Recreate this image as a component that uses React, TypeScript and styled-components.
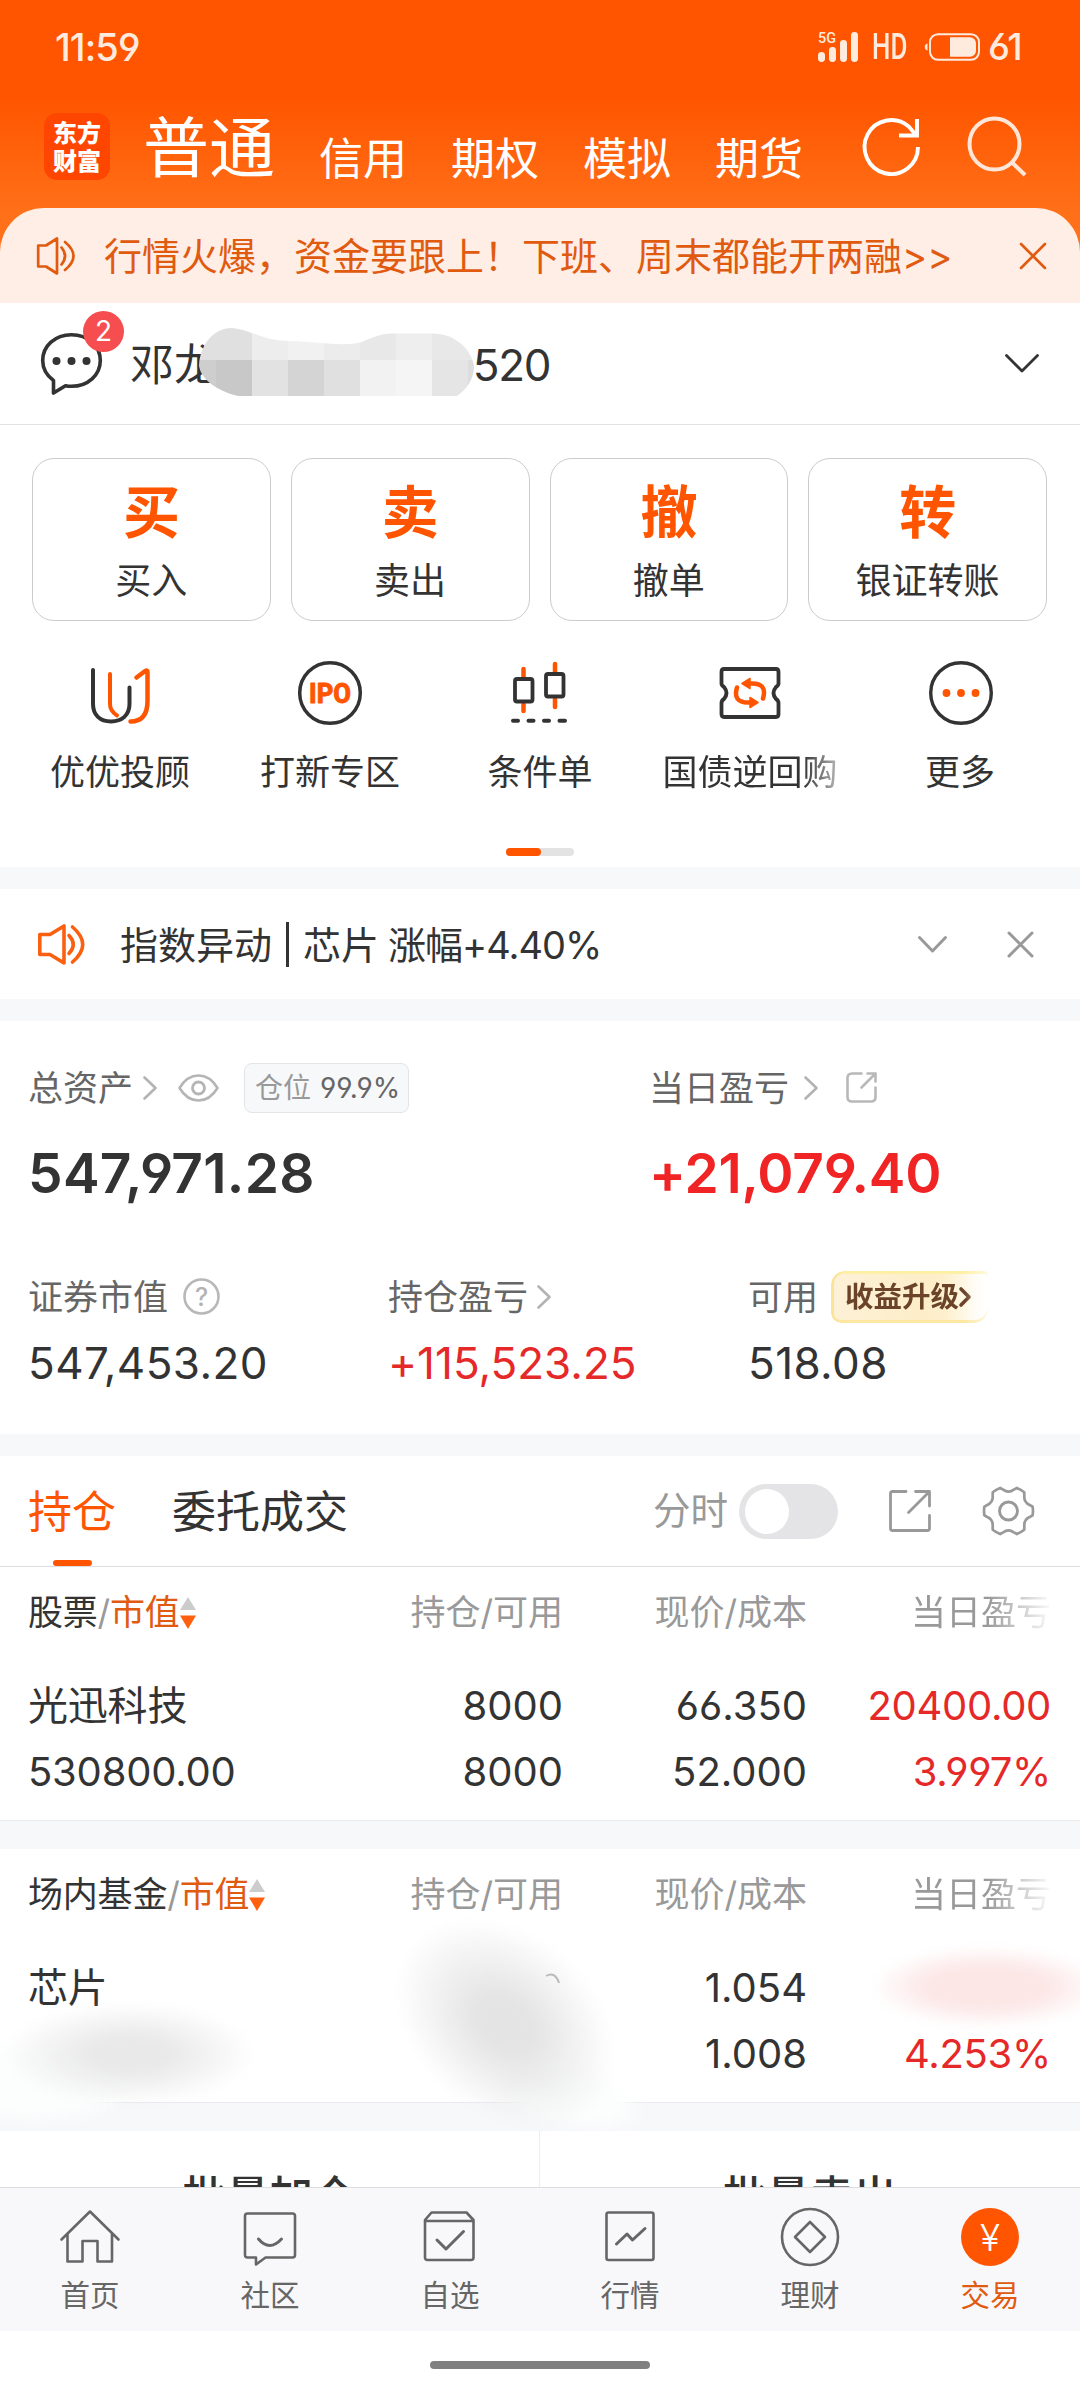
import React from 'react';
import styled, { createGlobalStyle, css } from 'styled-components';

const ORANGE = '#ff5500';
const DEEP_ORANGE = '#e05a10';
const INK = '#333333';
const RED = '#e52828';

const GlobalStyle = createGlobalStyle`
  * { box-sizing: border-box; }
  html, body { margin: 0; padding: 0; background: #ffffff; }
  body {
    width: 1080px;
    font-family: Inter, "Noto Sans CJK SC", sans-serif;
    font-feature-settings: 'cv03', 'cv04', 'calt' 0;
    color: ${INK};
    white-space: nowrap;
  }
  svg { display: block; flex: none; overflow: visible; }
`;

const Screen = styled.div`
  width: 1080px;
  height: 2400px;
  overflow: hidden;
  display: flex;
  flex-direction: column;
  background: #ffffff;
`;

/* ---------- top area ---------- */

const Top = styled.header`
  height: 303px;
  flex: none;
  background: linear-gradient(180deg, #ff5500 0, #ff5500 98px, #ff7018 212px);
`;

const StatusBar = styled.div`
  height: 94px;
  display: flex;
  align-items: center;
  padding: 0 57px 0 55px;
  color: #ffeade;
`;

const Clock = styled.span`
  font-size: 38px;
  font-weight: 500;
  line-height: 40px;
  letter-spacing: -0.9px;
  margin-right: auto;
`;

const SignalText = styled.text`
  font: 500 15.5px Roboto, sans-serif;
  fill: #ffeade;
`;

const HdLabel = styled.span`
  font: 500 37px/40px Roboto, sans-serif;
  width: 34px;
  margin: 0 19px 0 14px;
  transform: scaleX(0.7);
  transform-origin: left center;
`;

const BatteryText = styled.span`
  font-size: 37px;
  font-weight: 500;
  line-height: 40px;
  letter-spacing: -2.6px;
  width: 35px;
  margin-left: 8px;
`;

const Nav = styled.nav`
  height: 104px;
  display: flex;
  align-items: center;
  padding: 0 54px 0 44px;
  color: #ffffff;
`;

const Logo = styled.div`
  width: 66px;
  height: 67px;
  border-radius: 13px;
  background: #ff4600;
  font: 900 24px/28px "Noto Sans CJK SC", sans-serif;
  text-align: center;
  white-space: normal;
  padding: 5px 8px 0;
  margin-right: 33px;
`;

const NavTabs = styled.div`
  display: flex;
  gap: 44px;
  margin-right: auto;
`;

const NavTab = styled.span<{ $active?: boolean }>`
  font-size: ${p => (p.$active ? 66 : 44)}px;
  line-height: 80px;
  margin-top: ${p => (p.$active ? 15 : 26)}px;
`;

const NavIcons = styled.div`
  display: flex;
  gap: 48px;
`;

const Promo = styled.div`
  height: 95px;
  margin-top: 10px;
  border-radius: 44px 44px 0 0;
  background: #ffeee6;
  color: ${DEEP_ORANGE};
  display: flex;
  align-items: center;
  padding: 0 34px 0 37px;
`;

const PromoText = styled.span`
  font-size: 38px;
  line-height: 50px;
  margin: 0 auto 0 29px;
`;

/* ---------- account ---------- */

const Account = styled.div`
  height: 122px;
  flex: none;
  border-bottom: 1px solid #e2e2e2;
  display: flex;
  align-items: center;
  padding: 0 41px;
`;

const ChatButton = styled.div`
  position: relative;
  margin-right: 27px;
`;

const Badge = styled.span`
  position: absolute;
  left: 42px;
  top: -22px;
  width: 41px;
  height: 41px;
  border-radius: 50%;
  background: #f64d50;
  color: #ffffff;
  font-size: 28px;
  line-height: 41px;
  text-align: center;
`;

const AccountName = styled.div`
  position: relative;
  display: flex;
  align-items: center;
  justify-content: space-between;
  width: 420px;
  font-size: 44px;
  line-height: 60px;
  margin: 2px auto 0 1px;
`;

const Mosaic = styled.svg`
  position: absolute;
  left: 69px;
  top: -7px;
`;

const AccountTail = styled.span`
  letter-spacing: -1.4px;
`;

/* ---------- trade shortcuts ---------- */

const Cards = styled.div`
  flex: none;
  display: grid;
  grid-template-columns: repeat(4, 1fr);
  gap: 20px;
  padding: 33px 33px 0 32px;
`;

const Card = styled.div`
  height: 163px;
  border: 1px solid #cccccc;
  border-radius: 22px;
  display: flex;
  flex-direction: column;
  align-items: center;
`;

const CardGlyph = styled.span`
  font-size: 57px;
  font-weight: 700;
  line-height: 70px;
  color: ${ORANGE};
  margin-top: 19px;
`;

const CardLabel = styled.span`
  font-size: 36px;
  line-height: 50px;
  margin-top: 8px;
`;

const Shortcuts = styled.div`
  flex: none;
  display: grid;
  grid-template-columns: repeat(5, 210px);
  justify-content: center;
  padding-top: 40px;
`;

const Shortcut = styled.div`
  display: flex;
  flex-direction: column;
  align-items: center;
`;

const ShortcutLabel = styled.span<{ $fade?: boolean }>`
  font-size: 35px;
  line-height: 50px;
  margin-top: 22px;
  ${p =>
    p.$fade &&
    css`
      mask-image: linear-gradient(90deg, #000 80%, rgba(0, 0, 0, 0.35) 100%);
    `}
`;

const IpoText = styled.text`
  font: 800 28px Roboto, sans-serif;
  fill: ${ORANGE};
  stroke: ${ORANGE};
  stroke-width: 0.8px;
`;

const Pager = styled.div`
  flex: none;
  align-self: center;
  display: flex;
  width: 68px;
  height: 8px;
  margin: 51px 0 11px;
  border-radius: 4px;
  background: #e3e3e3;
`;

const PagerThumb = styled.div`
  width: 35px;
  border-radius: 4px;
  background: ${ORANGE};
`;

const Divider = styled.div<{ $h: number }>`
  flex: none;
  height: ${p => p.$h}px;
  background: #f7f8fa;
`;

/* ---------- notice ---------- */

const Notice = styled.div`
  flex: none;
  height: 110px;
  display: flex;
  align-items: center;
  padding: 0 47px 0 38px;
`;

const NoticeText = styled.span`
  display: flex;
  align-items: center;
  font-size: 38px;
  line-height: 50px;
  margin: 1px auto 0 35px;
`;

const NoticeBar = styled.i`
  width: 3px;
  height: 45px;
  background: ${INK};
  margin: 0 14px;
`;

const NoticeRate = styled.span`
  margin-left: 9px;
  letter-spacing: -1px;
`;

const NoticeActions = styled.div`
  display: flex;
  align-items: center;
  gap: 61px;
`;

/* ---------- assets ---------- */

const Assets = styled.section`
  flex: none;
  height: 413px;
  padding: 41px 28px 0;
`;

const TotalGrid = styled.div`
  display: grid;
  grid-template-columns: 621px 1fr;
`;

const DetailGrid = styled.div`
  display: grid;
  grid-template-columns: 360px 360px 1fr;
  margin-top: 68px;
`;

const Label = styled.div`
  height: 51px;
  display: flex;
  align-items: center;
  font-size: 35px;
  line-height: 50px;
  color: #666666;
`;

const Position = styled.span`
  height: 50px;
  margin-left: 25px;
  border: 1px solid #e3e4e6;
  border-radius: 8px;
  background: #f7f8fa;
  display: flex;
  align-items: center;
  gap: 9px;
  width: 165px;
  padding-left: 10px;
  font-size: 28px;
  line-height: 48px;
  color: #999999;
`;

const PositionRate = styled.span`
  color: #666666;
`;

const Total = styled.div<{ $up?: boolean }>`
  height: 60px;
  margin-top: 30px;
  font-size: 55px;
  font-weight: 600;
  line-height: 60px;
  letter-spacing: ${p => (p.$up ? -0.2 : 0.3)}px;
  color: ${p => (p.$up ? '#f02424' : INK)};
`;

const Amount = styled.div<{ $up?: boolean }>`
  height: 50px;
  margin-top: 16px;
  font-size: 44px;
  line-height: 50px;
  letter-spacing: ${p => (p.$up ? 0 : 0.4)}px;
  color: ${p => (p.$up ? RED : INK)};
`;

const Upgrade = styled.span`
  display: flex;
  align-items: center;
  width: 157px;
  height: 52px;
  margin-left: 13px;
  padding-left: 14px;
  border-radius: 14px 4px 14px 10px;
  background:
    linear-gradient(90deg, rgba(255, 255, 255, 0) 72%, #ffffff 100%),
    linear-gradient(100deg, #fdf1d8 0%, #fdeec8 60%, #fff3d6 100%);
  box-shadow: inset 3px 0 0 #fbe39a, inset 0 -3px 0 #fde7a2, inset 0 3px 0 #fdf0a6;
  color: #6a4328;
  font-size: 28.5px;
  font-weight: 700;
  mask-image: linear-gradient(90deg, #000 85%, rgba(0, 0, 0, 0.35) 100%);
`;

const HelpText = styled.text`
  font: 500 25px Inter, sans-serif;
  fill: #b3b3b3;
`;

/* ---------- holdings ---------- */

const Tabs = styled.div`
  flex: none;
  height: 111px;
  border-bottom: 1px solid #dddddd;
  display: flex;
  align-items: center;
  padding: 0 46px 0 28px;
`;

const Tab = styled.div<{ $active?: boolean }>`
  position: relative;
  font-size: 44px;
  line-height: 112px;
  height: 110px;
  margin-right: 56px;
  color: ${p => (p.$active ? ORANGE : INK)};
  ${p =>
    p.$active &&
    css`
      &::after {
        content: '';
        position: absolute;
        left: 25px;
        bottom: 0;
        width: 39px;
        height: 6px;
        border-radius: 3px;
        background: ${ORANGE};
      }
    `}
`;

const Intraday = styled.span`
  font-size: 37.5px;
  line-height: 60px;
  color: #999999;
  margin-left: auto;
`;

const Toggle = styled.span`
  width: 99px;
  height: 55px;
  border-radius: 28px;
  background: #e4e4e6;
  padding: 5px 6px;
  margin: 0 51px 0 11px;
`;

const Knob = styled.i`
  display: block;
  width: 44px;
  height: 45px;
  border-radius: 50%;
  background: #ffffff;
`;

const Table = styled.section`
  position: relative;
  flex: none;
  height: 254px;
  border-bottom: 1px solid #e8eaee;
`;

const TableRow = styled.div<{ $head?: boolean }>`
  display: grid;
  grid-template-columns: 353px 182px 244px 244px;
  padding-left: 28px;
  height: ${p => (p.$head ? 90 : 66)}px;
  line-height: ${p => (p.$head ? 91 : 67)}px;
  font-size: ${p => (p.$head ? 35 : 40)}px;
  margin-bottom: ${p => (p.$head ? 15 : 0)}px;
`;

const NameCell = styled.span`
  display: flex;
  align-items: center;
  letter-spacing: -0.2px;
`;

const NumCell = styled.span<{ $up?: boolean; $muted?: boolean; $fade?: boolean }>`
  text-align: right;
  letter-spacing: ${p => (p.$up ? -0.3 : 0)}px;
  color: ${p => (p.$muted ? '#999999' : p.$up ? RED : INK)};
  ${p =>
    p.$fade &&
    css`
      mask-image: linear-gradient(90deg, #000 74%, rgba(0, 0, 0, 0.08) 99%);
    `}
`;

const Slash = styled.span`
  color: #999999;
`;

const SortKey = styled.span`
  color: ${DEEP_ORANGE};
`;

const Smudge = styled.i<{ $x: number; $y: number; $w: number; $h: number; $c: string; $core: number; $blur: number; $turn?: number }>`
  position: absolute;
  z-index: 1;
  left: ${p => p.$x}px;
  top: ${p => p.$y}px;
  width: ${p => p.$w}px;
  height: ${p => p.$h}px;
  border-radius: 50%;
  background: radial-gradient(closest-side, ${p => p.$c} ${p => p.$core}%, transparent 100%);
  filter: blur(${p => p.$blur}px);
  transform: rotate(${p => p.$turn ?? 0}deg);
`;

const SmudgeTrace = styled.svg`
  position: absolute;
  z-index: 1;
  left: 545px;
  top: 123px;
`;

/* ---------- bottom ---------- */

const Batch = styled.div`
  flex: none;
  height: 56px;
  overflow: hidden;
  display: grid;
  grid-template-columns: 539px 541px;
`;

const BatchButton = styled.span`
  text-align: center;
  font-size: 43.500px;
  font-weight: 500;
  line-height: 131px;
  & + & {
    border-left: 1px solid #eeeeee;
  }
`;

const TabBar = styled.nav`
  flex: none;
  height: 144px;
  border-top: 1px solid #dedede;
  background: #f8f8fa;
  display: grid;
  grid-template-columns: repeat(6, 180px);
`;

const TabItem = styled.div<{ $active?: boolean }>`
  display: flex;
  flex-direction: column;
  align-items: center;
  padding-top: 19px;
  font-size: 29.5px;
  line-height: 40px;
  color: ${p => (p.$active ? DEEP_ORANGE : '#666666')};
`;

const TabLabel = styled.span`
  margin-top: 8px;
`;

const YuanText = styled.text`
  font: 300 37px Inter, sans-serif;
  fill: #ffffff;
`;

const HomeArea = styled.div`
  flex: none;
  height: 69px;
  display: flex;
  justify-content: center;
  padding-top: 30px;
`;

const HomePill = styled.i`
  width: 220px;
  height: 8px;
  border-radius: 4px;
  background: #808080;
`;

/* ---------- icons ---------- */

const line = { fill: 'none', strokeLinecap: 'round', strokeLinejoin: 'round' } as const;

const Signal = () => (
  <svg width="40" height="30" viewBox="0 0 40 30" fill="#ffeade">
    <SignalText x="0" y="11" textLength="18" lengthAdjust="spacingAndGlyphs">5G</SignalText>
    <rect x="0" y="20" width="7" height="10" rx="3.4" />
    <rect x="11" y="15" width="7" height="15" rx="3.4" />
    <rect x="22" y="8" width="7" height="22" rx="3.4" />
    <rect x="33" y="0" width="7" height="30" rx="3.4" />
  </svg>
);

const Battery = () => (
  <svg width="55" height="28" viewBox="0 0 55 28">
    <path d="M2.5 10.5a3.6 3.6 0 0 0 0 7z" fill="#ffeade" />
    <rect x="5" y="1.2" width="49" height="25.6" rx="8" fill="none" stroke="#ffeade" strokeWidth="2" />
    <path d="M25 4.2h20a6 6 0 0 1 6 6v7.600a6 6 0 0 1-6 6h-20z" fill="#ffeade" />
  </svg>
);

const Refresh = () => (
  <svg width="57" height="58" viewBox="0 0 57 58" fill="none" stroke="#fff" strokeWidth="3.9">
    <path d="M55 30A26.700 27 0 1 1 46 9.800L53 18" />
    <path d="M36 18.500H54V2" />
  </svg>
);

const Search = () => (
  <svg width="58" height="59" viewBox="0 0 58 59" {...line} stroke="#ffe6d8" strokeWidth="4" strokeLinecap="butt">
    <ellipse cx="26.500" cy="27" rx="25" ry="25.500" />
    <path d="M43.500 45L57 58" />
  </svg>
);

const Speaker = () => (
  <svg width="38" height="38" viewBox="0 0 38 38" {...line} stroke={DEEP_ORANGE} strokeWidth="2.7">
    <path d="M1.200 8.500H9L20 1.500V36.500L9 29.500H1.200Z" />
    <path d="M24.500 10.500Q31.500 19 24.500 27.500" />
    <path d="M28 5Q45 19 28 33" />
  </svg>
);

const SpeakerBold = () => (
  <svg width="47" height="41" viewBox="0 0 47 41" {...line} stroke="#fa6010" strokeWidth="3.600">
    <path d="M1.800 10.500H12L26 2V39L12 30.500H1.800Z" />
    <path d="M31 11.500Q39.500 20.500 31 29.500" />
    <path d="M34.500 3Q55 20.500 34.500 38" />
  </svg>
);

const Close = ({ size, color, weight }: { size: number; color: string; weight: number }) => (
  <svg width={size} height={size} viewBox="0 0 25 25" {...line} stroke={color} strokeWidth={weight}>
    <path d="M1 1L24 24M24 1L1 24" />
  </svg>
);

const Down = ({ w, h, color, weight }: { w: number; h: number; color: string; weight: number }) => (
  <svg width={w} height={h} {...line} stroke={color} strokeWidth={weight}>
    <path d={`M1.500 1.500L${w / 2} ${h - 2}L${w - 1.5} 1.500`} />
  </svg>
);

const ArrowIcon = styled.svg<{ $gap: number }>`
  margin-left: ${p => p.$gap}px;
`;

const Arrow = ({ gap }: { gap: number }) => (
  <ArrowIcon $gap={gap} width="14" height="24" {...line} stroke="#b3b3b3" strokeWidth="2.600">
    <path d="M1.500 1.500L12.500 12L1.500 22.500" />
  </ArrowIcon>
);

const Chat = () => (
  <svg width="61" height="62" viewBox="0 0 61 62" {...line} stroke={INK} strokeWidth="3.600">
    <path d="M12.500 60V47.500C5 42 1.700 35 1.700 27.500C1.700 13 14 1.700 30.500 1.700S59.300 13 59.300 27.500S47 53.300 30.500 53.300C28 53.300 26 53 24.500 52.700Z" />
    <g fill={INK} stroke="none">
      <circle cx="15.500" cy="28" r="4" />
      <circle cx="30.500" cy="28" r="4" />
      <circle cx="45.500" cy="28" r="4" />
    </g>
  </svg>
);

const mosaicRows = [
  ['#e0e0e0', '#e0e0e0', '#ededed', '#f1f1f1', '#ececec', '#e8e8e8', '#eeeeee', '#e8e8e8', '#e8e8e8'],
  ['#cecece', '#c8c8c8', '#e2e2e2', '#d4d4d4', '#e0e0e0', '#f2f2f2', '#f5f5f5', '#e5e5e5', '#dddddd'],
];

const NameMosaic = () => (
  <Mosaic width="275" height="68" viewBox="199 328 275 68">
    <clipPath id="name-mask">
      <path d="M199 366C200 345 213 328 232 328C252 330 262 341 290 341C318 342 345 347 362 342C380 334 385 333.500 396 333.500H432C455 333 472 350 474 366C474 380 466 390 457 396H238C218 391 202 381 199 366Z" />
    </clipPath>
    <g clipPath="url(#name-mask)">
      {mosaicRows.map((row, r) =>
        row.map((fill, c) => (
          <rect key={`${r}-${c}`} x={180 + c * 36} y={324 + r * 36} width="36.200" height="36.200" fill={fill} />
        )),
      )}
    </g>
  </Mosaic>
);

const Advisor = () => (
  <svg width="64" height="64" viewBox="0 0 64 64" {...line} strokeWidth="4">
    <path d="M5 9V43C5 54 12 60.500 23 60.500S41.500 54 41.500 43V26.500" stroke={INK} />
    <path d="M22 13V43Q22 50 29 54.500" stroke={ORANGE} />
    <path d="M48.500 16.500L57.500 9.800Q59.500 9 59.500 11V40Q59.500 60.500 42.500 60.500" stroke={ORANGE} strokeWidth="4.500" />
  </svg>
);

const Ipo = () => (
  <svg width="64" height="64" viewBox="0 0 64 64" {...line}>
    <circle cx="32" cy="32" r="30.300" stroke={INK} strokeWidth="3.500" />
    <IpoText x="32" y="42" textAnchor="middle" textLength="42" lengthAdjust="spacingAndGlyphs">IPO</IpoText>
  </svg>
);

const Candles = () => (
  <svg width="64" height="64" viewBox="0 0 64 64" {...line} strokeWidth="3.800">
    <path d="M15.500 8V16M15.500 43V50M47 3V12M47 38V46" stroke={ORANGE} strokeWidth="4.500" />
    <rect x="7" y="18" width="17.500" height="22.500" rx="2" stroke={INK} />
    <rect x="38" y="13" width="17.500" height="22.500" rx="2" stroke={INK} />
    <path d="M5 59.700H10M20.500 59.700H25.500M36 59.700H41M51.500 59.700H57" stroke={INK} strokeWidth="4" />
  </svg>
);

const Bond = () => (
  <svg width="64" height="64" viewBox="0 0 64 64" {...line}>
    <path
      d="M6 8H58Q60.500 8 60.500 11V22.500Q60.500 24.500 58 26Q53 32 58 38Q60.500 39.500 60.500 42V53Q60.500 56 58 56H6Q3.500 56 3.500 53V42Q3.500 39.500 6 38Q11 32 6 26Q3.500 24.500 3.500 22.500V11Q3.500 8 6 8Z"
      stroke={INK}
      strokeWidth="3.800"
    />
    <path d="M19 26.500Q14.500 41.500 30 41.500H33M45 37.500Q49.500 22.500 34 22.500H31" stroke={ORANGE} strokeWidth="4.500" />
    <path d="M24 22.500L32 17.500V27.500ZM40 41.500L32 36.500V46.500Z" fill={ORANGE} stroke={ORANGE} strokeWidth="1.500" />
  </svg>
);

const More = () => (
  <svg width="64" height="64" viewBox="0 0 64 64" {...line}>
    <circle cx="33" cy="32" r="30.300" stroke={INK} strokeWidth="3.400" />
    <g fill={ORANGE}>
      <circle cx="18.500" cy="32" r="3.900" />
      <circle cx="33" cy="32" r="3.900" />
      <circle cx="47.500" cy="32" r="3.900" />
    </g>
  </svg>
);

const EyeIcon = styled.svg`
  margin-left: 21px;
`;

const Eye = () => (
  <EyeIcon width="41" height="28" viewBox="0 0 41 28" {...line} stroke="#b5b5b5" strokeWidth="2.600">
    <path d="M1.500 14Q9 1.500 20.500 1.500T39.500 14Q32 26.500 20.500 26.500T1.500 14Z" />
    <circle cx="20.500" cy="14" r="6" strokeWidth="2.800" />
  </EyeIcon>
);

const ShareSmallIcon = styled.svg`
  margin-left: 28px;
`;

const ShareSmall = () => (
  <ShareSmallIcon width="31" height="31" viewBox="0 0 31 31" {...line} stroke="#b8b8b8" strokeWidth="2.600">
    <path d="M15.500 1.500H6Q1.500 1.500 1.500 6V25Q1.500 29.500 6 29.500H25Q29.500 29.500 29.500 25V15.500" />
    <path d="M21.500 1.500H29.500V9.500M29.500 1.500L15.500 15.500" />
  </ShareSmallIcon>
);

const Share = () => (
  <svg width="42" height="42" viewBox="0 0 42 42" {...line} stroke="#999999" strokeWidth="2.800">
    <path d="M17 1.500H3.500Q1.500 1.500 1.500 3.500V38.500Q1.500 40.500 3.500 40.500H38.500Q40.500 40.500 40.500 38.500V25.500" />
    <path d="M26.500 1.500H40.500V16M40.500 1.500L19.500 22.500" />
  </svg>
);

const HelpIcon = styled.svg`
  margin-left: 15px;
`;

const Help = () => (
  <HelpIcon width="37" height="37" viewBox="0 0 37 37" fill="none">
    <circle cx="18.500" cy="18.500" r="17" stroke="#b8b8b8" strokeWidth="2.600" />
    <HelpText x="18.500" y="27.500" textAnchor="middle">?</HelpText>
  </HelpIcon>
);

const polar = (r: number, deg: number) => {
  const a = (deg * Math.PI) / 180;
  return `${(r * Math.cos(a)).toFixed(2)} ${(r * Math.sin(a)).toFixed(2)}`;
};

const gearPath =
  [0, 60, 120, 180, 240, 300]
    .map((a, i) => `${i ? '' : `M${polar(24.5, a - 10)}`}Q${polar(24.8, a)} ${polar(24.5, a + 10)}L${polar(22, a + 16)}Q${polar(17.5, a + 30)} ${polar(22, a + 44)}L${polar(24.5, a + 50)}`)
    .join('') + 'Z';

const GearIcon = styled.svg`
  margin-left: 52px;
`;

const Gear = () => (
  <GearIcon width="51" height="50" viewBox="-25.500 -25 51 50" {...line} stroke="#999999" strokeWidth="2.700">
    <path d={gearPath} />
    <circle r="9" strokeWidth="2.900" />
  </GearIcon>
);

const Sort = () => (
  <svg width="16" height="32" viewBox="0 0 16 32">
    <path d="M8 0L16 13H0Z" fill="#cccccc" />
    <path d="M0 18.500H16L8 32Z" fill="#ff6010" />
  </svg>
);

const UpgradeArrow = () => (
  <svg width="12" height="20" {...line} stroke="#6a4328" strokeWidth="3.600">
    <path d="M2 2L10 10L2 18" />
  </svg>
);

const tabIcons: Record<string, React.ReactNode> = {
  首页: (
    <path d="M1.500 32.500L30 4.500L58.500 32.500M7.500 27V54.500H22.500V34H37.500V54.500H52V27" />
  ),
  社区: (
    <>
      <path d="M7.500 6.500H52.500Q55 6.500 55 9V48Q55 50.500 52.500 50.500H25.500L16 57.500V50.500H7.500Q5 50.500 5 48V9Q5 6.500 7.500 6.500Z" />
      <path d="M18.500 32Q29.500 45 41.500 32" strokeWidth="3" />
    </>
  ),
  自选: (
    <>
      <path d="M5 13L11.500 5.500H46.500L53.500 13V50.500Q53.500 53 51 53H7.500Q5 53 5 50.500ZM5 14H53.500" />
      <path d="M17 33L26 42L43.500 24.500" strokeWidth="3" />
    </>
  ),
  行情: (
    <>
      <rect x="6.500" y="5.500" width="47" height="47.500" rx="2" />
      <path d="M16.500 37L27 27L32.500 33L45 21.500" strokeWidth="3" />
    </>
  ),
  理财: (
    <>
      <circle cx="30" cy="30" r="28" />
      <path d="M30 15L45 30L30 45L15 30Z" />
    </>
  ),
  交易: (
    <>
      <circle cx="30" cy="30" r="29" fill={ORANGE} stroke="none" />
      <g stroke="none">
        <YuanText x="30" y="44" textAnchor="middle">¥</YuanText>
      </g>
    </>
  ),
};

/* ---------- data ---------- */

const cards = [
  ['买', '买入'],
  ['卖', '卖出'],
  ['撤', '撤单'],
  ['转', '银证转账'],
];

const shortcuts = [
  { label: '优优投顾', icon: <Advisor /> },
  { label: '打新专区', icon: <Ipo /> },
  { label: '条件单', icon: <Candles /> },
  { label: '国债逆回购', icon: <Bond />, fade: true },
  { label: '更多', icon: <More /> },
];

const HoldingHead = ({ name }: { name: string }) => (
  <TableRow $head>
    <NameCell>
      {name}
      <Slash>/</Slash>
      <SortKey>市值</SortKey>
      <Sort />
    </NameCell>
    <NumCell $muted>持仓/可用</NumCell>
    <NumCell $muted>现价/成本</NumCell>
    <NumCell $muted $fade>当日盈亏</NumCell>
  </TableRow>
);

const HoldingRow = ({ cells }: { cells: [string, string, string, string] }) => (
  <TableRow>
    <NameCell>{cells[0]}</NameCell>
    <NumCell>{cells[1]}</NumCell>
    <NumCell>{cells[2]}</NumCell>
    <NumCell $up>{cells[3]}</NumCell>
  </TableRow>
);

export default function App() {
  return (
    <Screen>
      <GlobalStyle />
      <Top>
        <StatusBar>
          <Clock>11:59</Clock>
          <Signal />
          <HdLabel>HD</HdLabel>
          <Battery />
          <BatteryText>61</BatteryText>
        </StatusBar>
        <Nav>
          <Logo>东方财富</Logo>
          <NavTabs>
            <NavTab $active>普通</NavTab>
            <NavTab>信用</NavTab>
            <NavTab>期权</NavTab>
            <NavTab>模拟</NavTab>
            <NavTab>期货</NavTab>
          </NavTabs>
          <NavIcons>
            <Refresh />
            <Search />
          </NavIcons>
        </Nav>
        <Promo>
          <Speaker />
          <PromoText>行情火爆，资金要跟上！下班、周末都能开两融&gt;&gt;</PromoText>
          <Close size={26} color={DEEP_ORANGE} weight={2.6} />
        </Promo>
      </Top>

      <Account>
        <ChatButton>
          <Chat />
          <Badge>2</Badge>
        </ChatButton>
        <AccountName>
          <span>邓龙</span>
          <AccountTail>520</AccountTail>
          <NameMosaic />
        </AccountName>
        <Down w={34} h={19} color={INK} weight={2.8} />
      </Account>

      <Cards>
        {cards.map(([glyph, label]) => (
          <Card key={label}>
            <CardGlyph>{glyph}</CardGlyph>
            <CardLabel>{label}</CardLabel>
          </Card>
        ))}
      </Cards>
      <Shortcuts>
        {shortcuts.map(s => (
          <Shortcut key={s.label}>
            {s.icon}
            <ShortcutLabel $fade={s.fade}>{s.label}</ShortcutLabel>
          </Shortcut>
        ))}
      </Shortcuts>
      <Pager>
        <PagerThumb />
      </Pager>
      <Divider $h={22} />

      <Notice>
        <SpeakerBold />
        <NoticeText>
          指数异动
          <NoticeBar />
          芯片
          <NoticeRate>涨幅+4.40%</NoticeRate>
        </NoticeText>
        <NoticeActions>
          <Down w={29} h={17} color="#999999" weight={3} />
          <Close size={25} color="#999999" weight={3} />
        </NoticeActions>
      </Notice>
      <Divider $h={22} />

      <Assets>
        <TotalGrid>
          <div>
            <Label>
              总资产
              <Arrow gap={10} />
              <Eye />
              <Position>
                仓位<PositionRate>99.9%</PositionRate>
              </Position>
            </Label>
            <Total>547,971.28</Total>
          </div>
          <div>
            <Label>
              当日盈亏
              <Arrow gap={15} />
              <ShareSmall />
            </Label>
            <Total $up>+21,079.40</Total>
          </div>
        </TotalGrid>
        <DetailGrid>
          <div>
            <Label>
              证券市值
              <Help />
            </Label>
            <Amount>547,453.20</Amount>
          </div>
          <div>
            <Label>
              持仓盈亏
              <Arrow gap={9} />
            </Label>
            <Amount $up>+115,523.25</Amount>
          </div>
          <div>
            <Label>
              可用
              <Upgrade>
                收益升级
                <UpgradeArrow />
              </Upgrade>
            </Label>
            <Amount>518.08</Amount>
          </div>
        </DetailGrid>
      </Assets>
      <Divider $h={22} />

      <Tabs>
        <Tab $active>持仓</Tab>
        <Tab>委托成交</Tab>
        <Intraday>分时</Intraday>
        <Toggle>
          <Knob />
        </Toggle>
        <Share />
        <Gear />
      </Tabs>

      <Table>
        <HoldingHead name="股票" />
        <HoldingRow cells={['光迅科技', '8000', '66.350', '20400.00']} />
        <HoldingRow cells={['530800.00', '8000', '52.000', '3.997%']} />
      </Table>
      <Divider $h={28} />

      <Table>
        <HoldingHead name="场内基金" />
        <HoldingRow cells={['芯片', '', '1.054', '']} />
        <HoldingRow cells={['', '', '1.008', '4.253%']} />
        <Smudge $x={-70} $y={190} $w={210} $h={86} $c="#fcfdfd" $core={75} $blur={7} />
        <Smudge $x={480} $y={215} $w={165} $h={62} $c="#fcfdfd" $core={75} $blur={6} $turn={14} />
        <Smudge $x={5} $y={154} $w={250} $h={102} $c="#e9e9e9" $core={32} $blur={6} />
        <Smudge $x={383} $y={86} $w={245} $h={178} $c="#e4e4e4" $core={26} $blur={6} $turn={42} />
        <Smudge $x={870} $y={98} $w={235} $h={80} $c="#fce6e6" $core={50} $blur={6} />
        <SmudgeTrace width="16" height="14" fill="none" stroke="#bbbbbb" strokeWidth="2">
          <path d="M1 4Q10 -1 14 11" />
        </SmudgeTrace>
      </Table>
      <Divider $h={28} />

      <Batch>
        <BatchButton>批量加仓</BatchButton>
        <BatchButton>批量卖出</BatchButton>
      </Batch>

      <TabBar>
        {Object.entries(tabIcons).map(([label, icon]) => (
          <TabItem key={label} $active={label === '交易'}>
            <svg width="60" height="60" viewBox="0 0 60 60" {...line} stroke="#666666" strokeWidth="2.600">
              {icon}
            </svg>
            <TabLabel>{label}</TabLabel>
          </TabItem>
        ))}
      </TabBar>
      <HomeArea>
        <HomePill />
      </HomeArea>
    </Screen>
  );
}
